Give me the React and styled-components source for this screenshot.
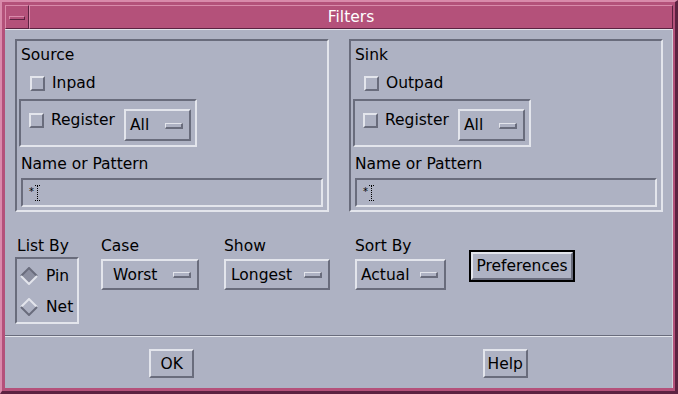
import styled, { createGlobalStyle } from 'styled-components';

const GlobalStyle = createGlobalStyle`
  body {
    margin: 0;
    background: #aeb2c3;
    font-family: "DejaVu Sans", "Liberation Sans", sans-serif;
  }
`;

const BG = '#aeb2c3';
const DARK = '#696c7c';
const LIGHT = '#e3e5ec';
const PINK = '#b4517a';
const PINK_LIGHT = '#d98aab';
const PINK_DARK = '#5c2241';

const Window = styled.div`
  width: 678px;
  height: 394px;
  box-sizing: border-box;
  background: ${PINK};
  border-style: solid;
  border-width: 2px 3px 3px 2px;
  border-color: ${PINK_LIGHT} ${PINK_DARK} ${PINK_DARK} ${PINK_LIGHT};
  padding: 3px 2px 3px 3px;
  display: flex;
  flex-direction: column;
`;

const TitleBar = styled.div`
  height: 24px;
  display: flex;
`;

const MenuBtn = styled.div`
  width: 24px;
  box-sizing: border-box;
  border-style: solid;
  border-width: 1px;
  border-color: ${PINK_LIGHT} ${PINK_DARK} ${PINK_DARK} ${PINK_LIGHT};
  display: flex;
  align-items: center;
  padding-left: 3px;
`;

const MenuBar = styled.div`
  width: 16px;
  height: 4px;
  box-sizing: border-box;
  border-style: solid;
  border-width: 1px;
  border-color: ${PINK_LIGHT} ${PINK_DARK} ${PINK_DARK} ${PINK_LIGHT};
  margin-top: 1px;
`;

const TitleLabel = styled.div`
  flex: 1;
  box-sizing: border-box;
  border-style: solid;
  border-width: 1px;
  border-color: ${PINK_LIGHT} ${PINK_DARK} ${PINK_DARK} ${PINK_LIGHT};
  color: #ffffff;
  font-size: 15.5px;
  display: flex;
  align-items: center;
  justify-content: center;
`;

const Body = styled.div`
  flex: 1;
  background: ${BG};
  border-top: 1px solid ${LIGHT};
  border-right: 1px solid #cfd1db;
  display: flex;
  flex-direction: column;
  font-size: 15.5px;
  color: #000;
`;

const TopRow = styled.div`
  display: flex;
  gap: 20px;
  padding: 9px 9px 0 10px;
`;

const Frame = styled.div`
  width: 314px;
  height: 173px;
  box-sizing: border-box;
  border-style: solid;
  border-width: 2px;
  border-color: ${DARK} ${LIGHT} ${LIGHT} ${DARK};
  padding: 5px 4px 3px 4px;
  display: flex;
  flex-direction: column;
`;

const Label = styled.div`
  line-height: 18px;
  height: 18px;
  white-space: nowrap;
  padding-left: ${(p) => p.$pl || 0}px;
  margin-top: ${(p) => p.$mt || 0}px;
`;

const CheckRow = styled.div`
  display: flex;
  align-items: center;
  gap: 7px;
  height: 18px;
  line-height: 18px;
  margin-top: ${(p) => p.$mt || 0}px;
  margin-left: ${(p) => p.$ml || 0}px;
`;

const CheckBox = styled.div`
  width: 15px;
  height: 15px;
  box-sizing: border-box;
  border-style: solid;
  border-width: 2px;
  border-color: ${LIGHT} ${DARK} ${DARK} ${LIGHT};
  background: ${BG};
`;

const SubFrame = styled.div`
  width: 178px;
  height: 48px;
  box-sizing: border-box;
  margin: 7px 0 0 -2px;
  border-style: solid;
  border-width: 2px;
  border-color: ${DARK} ${LIGHT} ${LIGHT} ${DARK};
  padding: 0 4px 0 8px;
  display: flex;
  align-items: flex-start;
`;

const OptionMenu = styled.div`
  width: ${(p) => p.$w}px;
  height: ${(p) => p.$h || 31}px;
  box-sizing: border-box;
  border-style: solid;
  border-width: 2px;
  border-color: ${LIGHT} ${DARK} ${DARK} ${LIGHT};
  padding: 0 6px 0 ${(p) => p.$pl}px;
  margin-top: ${(p) => p.$mt || 0}px;
  margin-left: ${(p) => (p.$auto ? 'auto' : '0')};
  display: flex;
  align-items: center;
  justify-content: space-between;
  white-space: nowrap;
`;

const Indicator = styled.div`
  width: 18px;
  height: 6px;
  box-sizing: border-box;
  border-style: solid;
  border-width: 1px 2px 2px 1px;
  border-color: ${LIGHT} ${DARK} ${DARK} ${LIGHT};
  margin-top: ${(p) => p.$mt || 0}px;
`;

const TextField = styled.div`
  width: 302px;
  height: 29px;
  box-sizing: border-box;
  margin-top: 5px;
  border-style: solid;
  border-width: 2px;
  border-color: ${DARK} ${LIGHT} ${LIGHT} ${DARK};
  padding-left: 6px;
  display: flex;
  align-items: center;
  gap: 1px;
`;

const Star = styled.span`
  font-size: 10px;
  line-height: 10px;
  margin-top: -2px;
`;

const BottomRow = styled.div`
  display: flex;
  align-items: flex-start;
  margin-top: 25px;
  padding-left: 10px;
`;

const Column = styled.div`
  display: flex;
  flex-direction: column;
  width: ${(p) => p.$w}px;
  margin-left: ${(p) => p.$ml || 0}px;
`;

const RadioBox = styled.div`
  width: 64px;
  height: 67px;
  box-sizing: border-box;
  margin-top: 2px;
  border-style: solid;
  border-width: 2px;
  border-color: ${DARK} ${LIGHT} ${LIGHT} ${DARK};
  padding: 1px 0 0 3px;
  display: flex;
  flex-direction: column;
`;

const RadioRow = styled.div`
  height: 31px;
  display: flex;
  align-items: center;
  gap: 8px;
`;

const PushButton = styled.div`
  width: ${(p) => p.$w}px;
  height: ${(p) => p.$h}px;
  box-sizing: border-box;
  border-style: solid;
  border-width: 2px;
  border-color: ${LIGHT} ${DARK} ${DARK} ${LIGHT};
  display: flex;
  align-items: center;
  justify-content: center;
  white-space: nowrap;
`;

const DefaultRing = styled.div`
  margin: 13px 0 0 23px;
  border: 2px solid #000;
`;

const Separator = styled.div`
  margin-top: 11px;
  border-top: 1px solid ${DARK};
  border-bottom: 1px solid ${LIGHT};
`;

const ButtonRow = styled.div`
  display: flex;
  margin-top: 12px;
`;

const ButtonCell = styled.div`
  flex: 1;
  display: flex;
  justify-content: center;
`;

function Diamond({ on }) {
  const tl = on ? DARK : LIGHT;
  const br = on ? LIGHT : DARK;
  return (
    <svg width="18" height="18" viewBox="0 0 18 18">
      {on && <polygon points="9,1 17,9 9,17 1,9" fill="#8c8fa0" />}
      <polyline points="1,9 9,1 17,9" fill="none" stroke={tl} strokeWidth="2" />
      <polyline points="17,9 9,17 1,9" fill="none" stroke={br} strokeWidth="2" />
    </svg>
  );
}

function Cursor() {
  return (
    <svg width="5" height="16" viewBox="0 0 5 16">
      <line x1="2.5" y1="1" x2="2.5" y2="15" stroke="#000" strokeWidth="1" strokeDasharray="1 1" />
      <line x1="0" y1="0.5" x2="5" y2="0.5" stroke="#000" strokeWidth="1" strokeDasharray="1 1" />
      <line x1="0" y1="15.5" x2="5" y2="15.5" stroke="#000" strokeWidth="1" strokeDasharray="1 1" />
    </svg>
  );
}

function PadFrame({ title, pad }) {
  return (
    <Frame>
      <Label>{title}</Label>
      <CheckRow $mt={10} $ml={9}>
        <CheckBox />
        {pad}
      </CheckRow>
      <SubFrame>
        <CheckRow $mt={10}>
          <CheckBox />
          Register
        </CheckRow>
        <OptionMenu $w={67} $h={32} $pl={4} $mt={8} $auto>
          All
          <Indicator $mt={2} />
        </OptionMenu>
      </SubFrame>
      <Label $mt={8}>Name or Pattern</Label>
      <TextField>
        <Star>*</Star>
        <Cursor />
      </TextField>
    </Frame>
  );
}

export default function App() {
  return (
    <>
      <GlobalStyle />
      <Window>
        <TitleBar>
          <MenuBtn>
            <MenuBar />
          </MenuBtn>
          <TitleLabel>Filters</TitleLabel>
        </TitleBar>
        <Body>
          <TopRow>
            <PadFrame title="Source" pad="Inpad" />
            <PadFrame title="Sink" pad="Outpad" />
          </TopRow>
          <BottomRow>
            <Column $w={64}>
              <Label $pl={2}>List By</Label>
              <RadioBox>
                <RadioRow>
                  <Diamond on />
                  Pin
                </RadioRow>
                <RadioRow>
                  <Diamond />
                  Net
                </RadioRow>
              </RadioBox>
            </Column>
            <Column $w={98} $ml={22}>
              <Label>Case</Label>
              <OptionMenu $w={98} $pl={10} $mt={4}>
                Worst
                <Indicator />
              </OptionMenu>
            </Column>
            <Column $w={106} $ml={25}>
              <Label>Show</Label>
              <OptionMenu $w={106} $pl={5} $mt={4}>
                Longest
                <Indicator />
              </OptionMenu>
            </Column>
            <Column $w={91} $ml={25}>
              <Label>Sort By</Label>
              <OptionMenu $w={91} $pl={4} $mt={4}>
                Actual
                <Indicator />
              </OptionMenu>
            </Column>
            <DefaultRing>
              <PushButton $w={102} $h={28}>Preferences</PushButton>
            </DefaultRing>
          </BottomRow>
          <Separator />
          <ButtonRow>
            <ButtonCell>
              <PushButton $w={45} $h={29}>OK</PushButton>
            </ButtonCell>
            <ButtonCell>
              <PushButton $w={45} $h={29}>Help</PushButton>
            </ButtonCell>
          </ButtonRow>
        </Body>
      </Window>
    </>
  );
}
